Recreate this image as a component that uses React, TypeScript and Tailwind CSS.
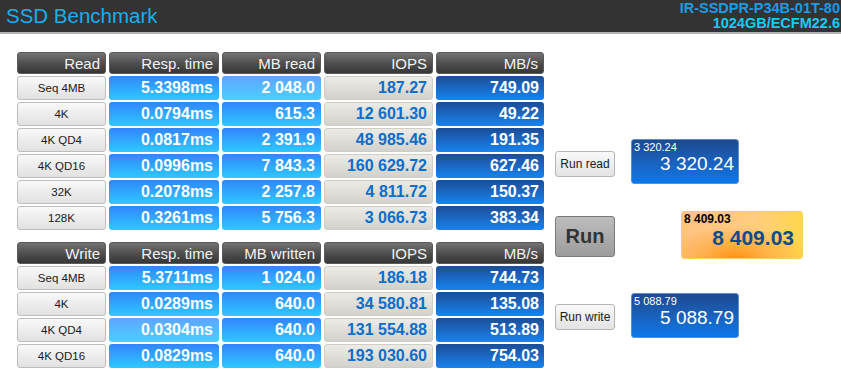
import React from "react";

type Row = { label: string; resp: string; mb: string; iops: string; mbs: string; respLight?: boolean; mbLight?: boolean };

const readRows: Row[] = [
  { label: "Seq 4MB", resp: "5.3398ms", mb: "2 048.0", iops: "187.27", mbs: "749.09", mbLight: true },
  { label: "4K", resp: "0.0794ms", mb: "615.3", iops: "12 601.30", mbs: "49.22" },
  { label: "4K QD4", resp: "0.0817ms", mb: "2 391.9", iops: "48 985.46", mbs: "191.35" },
  { label: "4K QD16", resp: "0.0996ms", mb: "7 843.3", iops: "160 629.72", mbs: "627.46" },
  { label: "32K", resp: "0.2078ms", mb: "2 257.8", iops: "4 811.72", mbs: "150.37" },
  { label: "128K", resp: "0.3261ms", mb: "5 756.3", iops: "3 066.73", mbs: "383.34" },
];

const writeRows: Row[] = [
  { label: "Seq 4MB", resp: "5.3711ms", mb: "1 024.0", iops: "186.18", mbs: "744.73" },
  { label: "4K", resp: "0.0289ms", mb: "640.0", iops: "34 580.81", mbs: "135.08" },
  { label: "4K QD4", resp: "0.0304ms", mb: "640.0", iops: "131 554.88", mbs: "513.89", respLight: true },
  { label: "4K QD16", resp: "0.0829ms", mb: "640.0", iops: "193 030.60", mbs: "754.03" },
];

const font = "font-['Liberation_Sans',Arial,sans-serif]";

function Header({ text }: { text: string }) {
  return (
    <div className={`h-[22px] rounded-[3px] border border-[#5a5a5a] bg-linear-to-b from-[#737373] via-[#505050] to-[#363636] text-right pr-[5px] text-[15px] leading-[21px] text-[#f2f2f2] ${font}`}>
      {text}
    </div>
  );
}

function Label({ text }: { text: string }) {
  return (
    <div className={`h-[24px] rounded-[3px] border border-[#bdbdbd] bg-linear-to-b from-[#f9f9f9] to-[#e1e1e1] text-center text-[11.5px] leading-[22px] text-[#1a1a1a] ${font}`}>
      {text}
    </div>
  );
}

function Blue({ text, light }: { text: string; light?: boolean }) {
  return (
    <div
      className={`h-[24px] rounded-[3px] text-right pr-[6px] text-[16px] font-bold leading-[24px] text-white ${font} ${
        light
          ? "bg-linear-to-b from-[#5ea4ff] to-[#48d0ff]"
          : "bg-linear-to-b from-[#3484fb] to-[#2ec9ff]"
      }`}
    >
      {text}
    </div>
  );
}

function Gray({ text }: { text: string }) {
  return (
    <div className={`h-[24px] rounded-[3px] border border-[#cfcdc7] bg-linear-to-b from-[#ecebe5] to-[#d3d1cc] text-right pr-[5px] text-[16px] font-bold leading-[22px] text-[#0b6ecb] ${font}`}>
      {text}
    </div>
  );
}

function Dark({ text }: { text: string }) {
  return (
    <div className={`h-[24px] rounded-[3px] bg-linear-to-b from-[#1b4d98] to-[#1584f0] text-right pr-[5px] text-[16px] font-bold leading-[24px] text-white ${font}`}>
      {text}
    </div>
  );
}

function Table({ title, mbTitle, rows }: { title: string; mbTitle: string; rows: Row[] }) {
  return (
    <div className="grid grid-cols-[89px_110px_99px_109px_108px] gap-x-[3px] gap-y-[2px]">
      <Header text={title} />
      <Header text="Resp. time" />
      <Header text={mbTitle} />
      <Header text="IOPS" />
      <Header text="MB/s" />
      {rows.map((r) => (
        <React.Fragment key={r.label}>
          <Label text={r.label} />
          <Blue text={r.resp} light={r.respLight} />
          <Blue text={r.mb} light={r.mbLight} />
          <Gray text={r.iops} />
          <Dark text={r.mbs} />
        </React.Fragment>
      ))}
    </div>
  );
}

function SmallButton({ text }: { text: string }) {
  return (
    <div className={`w-[60px] h-[26px] rounded-[3px] border border-[#b5b5b5] bg-linear-to-b from-[#f9f9f9] to-[#e3e3e3] text-center text-[12px] leading-[24px] text-[#1a1a1a] ${font}`}>
      {text}
    </div>
  );
}

function ResultBox({ value }: { value: string }) {
  return (
    <div className={`w-[108px] h-[45px] rounded-[3px] border border-[#5d8fd0] bg-linear-to-b from-[#1d4a8f] to-[#0a78ea] text-white ${font} flex flex-col px-[2px]`}>
      <div className="text-[11px] leading-[12px] pt-[1px]">{value}</div>
      <div className="text-[19px] leading-[22px] text-right pr-[2px]">{value}</div>
    </div>
  );
}

export default function App() {
  return (
    <div className="w-[841px] h-[392px] bg-white overflow-hidden">
      <div className="h-[34px] bg-[#333333] border-b-[2px] border-[#b4b4b4] flex justify-between">
        <div className={`pl-[6px] pt-[2px] text-[20.5px] leading-[28px] text-[#18aef2] ${font}`}>SSD Benchmark</div>
        <div className={`text-right pr-[1px] pt-[1px] font-bold text-[14.5px] leading-[15px] ${font}`}>
          <div className="text-[#1b9ce6]">IR-SSDPR-P34B-01T-80</div>
          <div className="text-[#12cdf2]">1024GB/ECFM22.6</div>
        </div>
      </div>
      <div className="flex pl-[17px] pt-[18px]">
        <div className="flex flex-col gap-[12px]">
          <Table title="Read" mbTitle="MB read" rows={readRows} />
          <Table title="Write" mbTitle="MB written" rows={writeRows} />
        </div>
        <div className="ml-[11px] pt-[87px] flex flex-col">
          <div className="flex items-start">
            <div className="mt-[12px]">
              <SmallButton text="Run read" />
            </div>
            <div className="ml-[16px]">
              <ResultBox value="3 320.24" />
            </div>
          </div>
          <div className="flex items-start mt-[27px]">
            <div className={`mt-[5px] w-[60px] h-[41px] rounded-[3px] border border-[#7a7a7a] bg-linear-to-b from-[#bdbdbd] to-[#9c9c9c] text-center text-[20px] font-bold leading-[39px] text-[#333] ${font}`}>
              Run
            </div>
            <div
              className={`ml-[66px] w-[122px] h-[48px] rounded-[3px] border border-[#f4d060] bg-[radial-gradient(ellipse_60%_70%_at_45%_100%,#ff9412_0%,rgba(255,160,40,0.6)_45%,rgba(255,190,90,0)_100%),linear-gradient(to_right,#ffc283,#ffcc80_60%,#ffd74a)] ${font} flex flex-col px-[2px]`}
            >
              <div className="text-[12px] font-bold leading-[13px] pt-[1px] text-black">8 409.03</div>
              <div className="text-[21px] font-bold leading-[24px] text-right pr-[6px] text-[#0c4b8e]">8 409.03</div>
            </div>
          </div>
          <div className="flex items-start mt-[34px]">
            <div className="mt-[11px]">
              <SmallButton text="Run write" />
            </div>
            <div className="ml-[16px]">
              <ResultBox value="5 088.79" />
            </div>
          </div>
        </div>
      </div>
    </div>
  );
}
